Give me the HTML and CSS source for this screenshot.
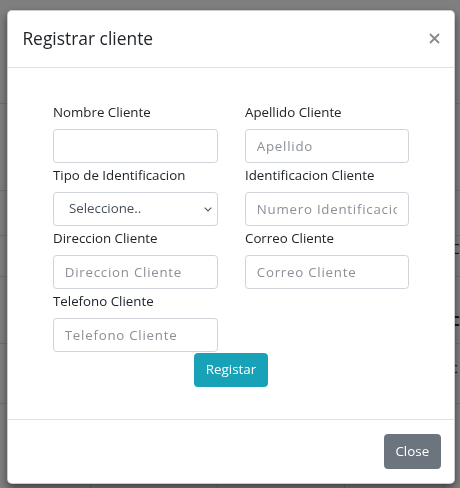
FILE: index.html
```html
<!DOCTYPE html>
<html lang="es">
<head>
<meta charset="utf-8">
<title>Registrar cliente</title>
<link rel="stylesheet" href="styles.css">
</head>
<body>
<div class="page">
  <table class="bg-table">
    <tr class="r1"><td></td><td></td><td></td><td></td><td></td></tr>
    <tr class="r2"><td></td><td></td><td></td><td></td><td></td></tr>
    <tr class="r3"><td></td><td></td><td></td><td></td><td></td></tr>
    <tr class="r4"><td></td><td></td><td></td><td></td><td class="frag">Co</td></tr>
    <tr class="r5"><td></td><td></td><td></td><td></td><td class="frag strong">C</td></tr>
    <tr class="r6"><td></td><td></td><td></td><td></td><td class="frag">c</td></tr>
    <tr class="r7"><td></td><td></td><td></td><td></td><td></td></tr>
  </table>
</div>
<div class="backdrop"></div>
<div class="modal">
  <div class="modal-content">
    <div class="modal-header">
      <h5 class="modal-title">Registrar cliente</h5>
      <button class="close" type="button" aria-label="Close">
        <svg width="11" height="11" viewBox="0 0 11 11"><path d="M1 1L10 10M10 1L1 10" stroke="#8a8a8a" stroke-width="1.8"/></svg>
      </button>
    </div>
    <div class="modal-body">
      <form class="form">
        <div class="grid">
          <div class="field">
            <label>Nombre Cliente</label>
            <input class="control" type="text">
          </div>
          <div class="field">
            <label>Apellido Cliente</label>
            <input class="control" type="text" placeholder="Apellido">
          </div>
          <div class="field">
            <label>Tipo de Identificacion</label>
            <div class="select-wrap">
              <select class="control select">
                <option>Seleccione..</option>
              </select>
              <svg class="chevron" width="8" height="5" viewBox="0 0 8 5"><path d="M0.7 0.7L4 4L7.3 0.7" fill="none" stroke="#5a5a5a" stroke-width="1.1"/></svg>
            </div>
          </div>
          <div class="field">
            <label>Identificacion Cliente</label>
            <input class="control" type="text" placeholder="Numero Identificacion">
          </div>
          <div class="field">
            <label>Direccion Cliente</label>
            <input class="control" type="text" placeholder="Direccion Cliente">
          </div>
          <div class="field">
            <label>Correo Cliente</label>
            <input class="control" type="text" placeholder="Correo Cliente">
          </div>
          <div class="field">
            <label>Telefono Cliente</label>
            <input class="control" type="text" placeholder="Telefono Cliente">
          </div>
        </div>
        <div class="actions">
          <button class="btn btn-info" type="button">Registar</button>
        </div>
      </form>
    </div>
    <div class="modal-footer">
      <button class="btn btn-secondary" type="button">Close</button>
    </div>
  </div>
</div>
</body>
</html>
```

FILE: styles.css
```css
* { box-sizing: border-box; }
html, body { margin: 0; padding: 0; }
body {
  width: 460px;
  height: 488px;
  overflow: hidden;
  background: #fff;
  font-family: "Open Sans", "Noto Sans", sans-serif;
  font-size: 13.3px;
  color: #212529;
}
.page { width: 460px; }
.bg-table {
  width: 470px;
  border-collapse: collapse;
  table-layout: fixed;
}
.bg-table td {
  border: 0;
  border-bottom: 1px solid #dee2e6;
  padding: 0 0 0 12px;
  vertical-align: top;
  white-space: nowrap;
  overflow: hidden;
  font-size: 14px;
  color: #212529;
}
.bg-table tr.r7 td { border-left: 1px solid #dee2e6; }
.bg-table tr.r7 td:first-child { border-left: 0; }
.bg-table td:nth-child(1) { width: 90px; }
.bg-table td:nth-child(2) { width: 127px; }
.bg-table td:nth-child(3) { width: 127px; }
.bg-table td:nth-child(4) { width: 99px; }
.bg-table .r1 { height: 103px; }
.bg-table .r2 { height: 87px; }
.bg-table .r3 { height: 45px; }
.bg-table .r4 { height: 41px; }
.bg-table .r5 { height: 67px; }
.bg-table .r6 { height: 60px; }
.bg-table .r7 { height: 100px; }
.bg-table td.frag { padding-left: 8px; padding-top: 3px; }
.bg-table .r5 td.frag { padding-top: 34px; }
.bg-table .r6 td.frag { padding-top: 14px; }
.strong { font-weight: 700; }

.backdrop {
  position: fixed;
  inset: 0;
  background: rgba(0, 0, 0, 0.5);
}
.modal {
  position: fixed;
  inset: 0;
}
.modal-content {
  width: 448px;
  height: 474px;
  margin: 10px 0 0 7px;
  background: #fff;
  border: 1px solid rgba(0, 0, 0, 0.2);
  border-radius: 5px;
  box-shadow: 0 4px 8px rgba(0, 0, 0, 0.5);
  display: flex;
  flex-direction: column;
}
.modal-header {
  display: flex;
  align-items: center;
  justify-content: space-between;
  padding: 14.4px 14.4px;
  border-bottom: 1px solid #dee2e6;
}
.modal-title {
  margin: 0;
  font-size: 17.4px;
  line-height: 27px;
  font-weight: 500;
  color: #212529;
}
.close {
  border: 0;
  background: none;
  padding: 0;
  width: 11px;
  height: 11px;
  display: flex;
}
.modal-body {
  flex: 1;
  padding: 14.4px;
}
.form {
  margin: 0;
  padding-top: 18px;
}
.grid {
  display: grid;
  grid-template-columns: 165px 164px;
  column-gap: 27px;
  justify-content: center;
}
.field label {
  display: block;
  line-height: 21.6px;
  padding-top: 2px;
  margin-bottom: 5.2px;
  color: #212529;
}
.control {
  display: block;
  width: 100%;
  height: 34.2px;
  padding: 5.4px 10.8px;
  font-family: "Open Sans", "Noto Sans", sans-serif;
  font-size: 13.3px;
  line-height: 21.6px;
  color: #495057;
  background: #fff;
  border: 1px solid #ced4da;
  border-radius: 3.6px;
  outline: none;
}
.control::placeholder {
  color: #8b9197;
  letter-spacing: 0.75px;
}
.select-wrap { position: relative; }
.select {
  -webkit-appearance: none;
  appearance: none;
  padding: 5.4px 20px 5.4px 15px;
  color: #495057;
}
.chevron {
  position: absolute;
  right: 6px;
  top: 15px;
  pointer-events: none;
}
.actions {
  display: flex;
  justify-content: center;
  padding-top: 1px;
}
.btn {
  font-family: "Open Sans", "Noto Sans", sans-serif;
  font-size: 13.4px;
  line-height: 21.6px;
  padding: 5.4px 10.8px;
  border: 1px solid transparent;
  border-radius: 3.6px;
  color: #fff;
  height: 34.2px;
}
.btn-info {
  background: #17a2b8;
  border-color: #17a2b8;
}
.btn-secondary {
  background: #6c757d;
  border-color: #6c757d;
}
.modal-footer {
  display: flex;
  justify-content: flex-end;
  padding: 14.4px 13px 14.4px 14.4px;
  border-top: 1px solid #dee2e6;
}
```
